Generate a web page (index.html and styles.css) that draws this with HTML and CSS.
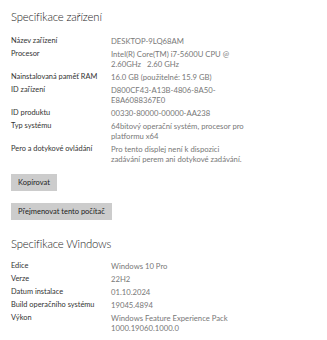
FILE: index.html
```html
<!DOCTYPE html>
<html lang="cs">
<head>
<meta charset="utf-8">
<link rel="stylesheet" href="styles.css">
</head>
<body>
<div class="page">
  <h2 class="title">Specifikace zařízení</h2>
  <div class="rows">
    <div class="label">Název zařízení</div><div class="value">DESKTOP-9LQ68AM</div>
    <div class="label">Procesor</div><div class="value">Intel(R) Core(TM) i7-5600U CPU @<br>2.60GHz&nbsp;&nbsp;&nbsp;2.60 GHz</div>
    <div class="label">Nainstalovaná paměť RAM</div><div class="value">16.0 GB (použitelné: 15.9 GB)</div>
    <div class="label">ID zařízení</div><div class="value">D800CF43-A13B-4806-8A50-<br>E8A6088367E0</div>
    <div class="label">ID produktu</div><div class="value">00330-80000-00000-AA238</div>
    <div class="label">Typ systému</div><div class="value">64bitový operační systém, procesor pro<br>platformu x64</div>
    <div class="label">Pero a dotykové ovládání</div><div class="value">Pro tento displej není k dispozici<br>zadávání perem ani dotykové zadávání.</div>
  </div>
  <button class="btn btn-copy">Kopírovat</button>
  <button class="btn btn-rename">Přejmenovat tento počítač</button>
  <h2 class="title title-win">Specifikace Windows</h2>
  <div class="rows rows-win">
    <div class="label">Edice</div><div class="value">Windows 10 Pro</div>
    <div class="label">Verze</div><div class="value">22H2</div>
    <div class="label">Datum instalace</div><div class="value">01.10.2024</div>
    <div class="label">Build operačního systému</div><div class="value">19045.4894</div>
    <div class="label">Výkon</div><div class="value">Windows Feature Experience Pack<br>1000.19060.1000.0</div>
  </div>
</div>
</body>
</html>
```
FILE: styles.css
```css
html, body {
  margin: 0;
  padding: 0;
  background: #ffffff;
}
body {
  font-family: "Lato", "Open Sans", sans-serif;
  color: #1f1f1f;
}
.page {
  padding: 8px 11px 0 11px;
  display: flex;
  flex-direction: column;
  align-items: flex-start;
}
.title {
  margin: 0;
  font-size: 11.3px;
  letter-spacing: -0.15px;
  line-height: 17px;
  font-weight: 300;
  color: #1a1a1a;
}
.rows {
  display: grid;
  grid-template-columns: 100px 140px;
  row-gap: 3px;
  margin-top: 11px;
  line-height: 10px;
  white-space: nowrap;
}
.label {
  font-size: 7.4px;
  color: #333333;
}
.value {
  font-size: 7.7px;
  color: #787878;
}
.btn {
  font-family: inherit;
  font-size: 7.5px;
  line-height: 17px;
  height: 17px;
  padding: 0 7px;
  border: none;
  background: #cccccc;
  color: #222222;
}
.btn-copy {
  margin-top: 10px;
}
.btn-rename {
  margin-top: 12px;
}
.title-win {
  margin-top: 15px;
}
.rows-win {
  margin-top: 9px;
}
```
